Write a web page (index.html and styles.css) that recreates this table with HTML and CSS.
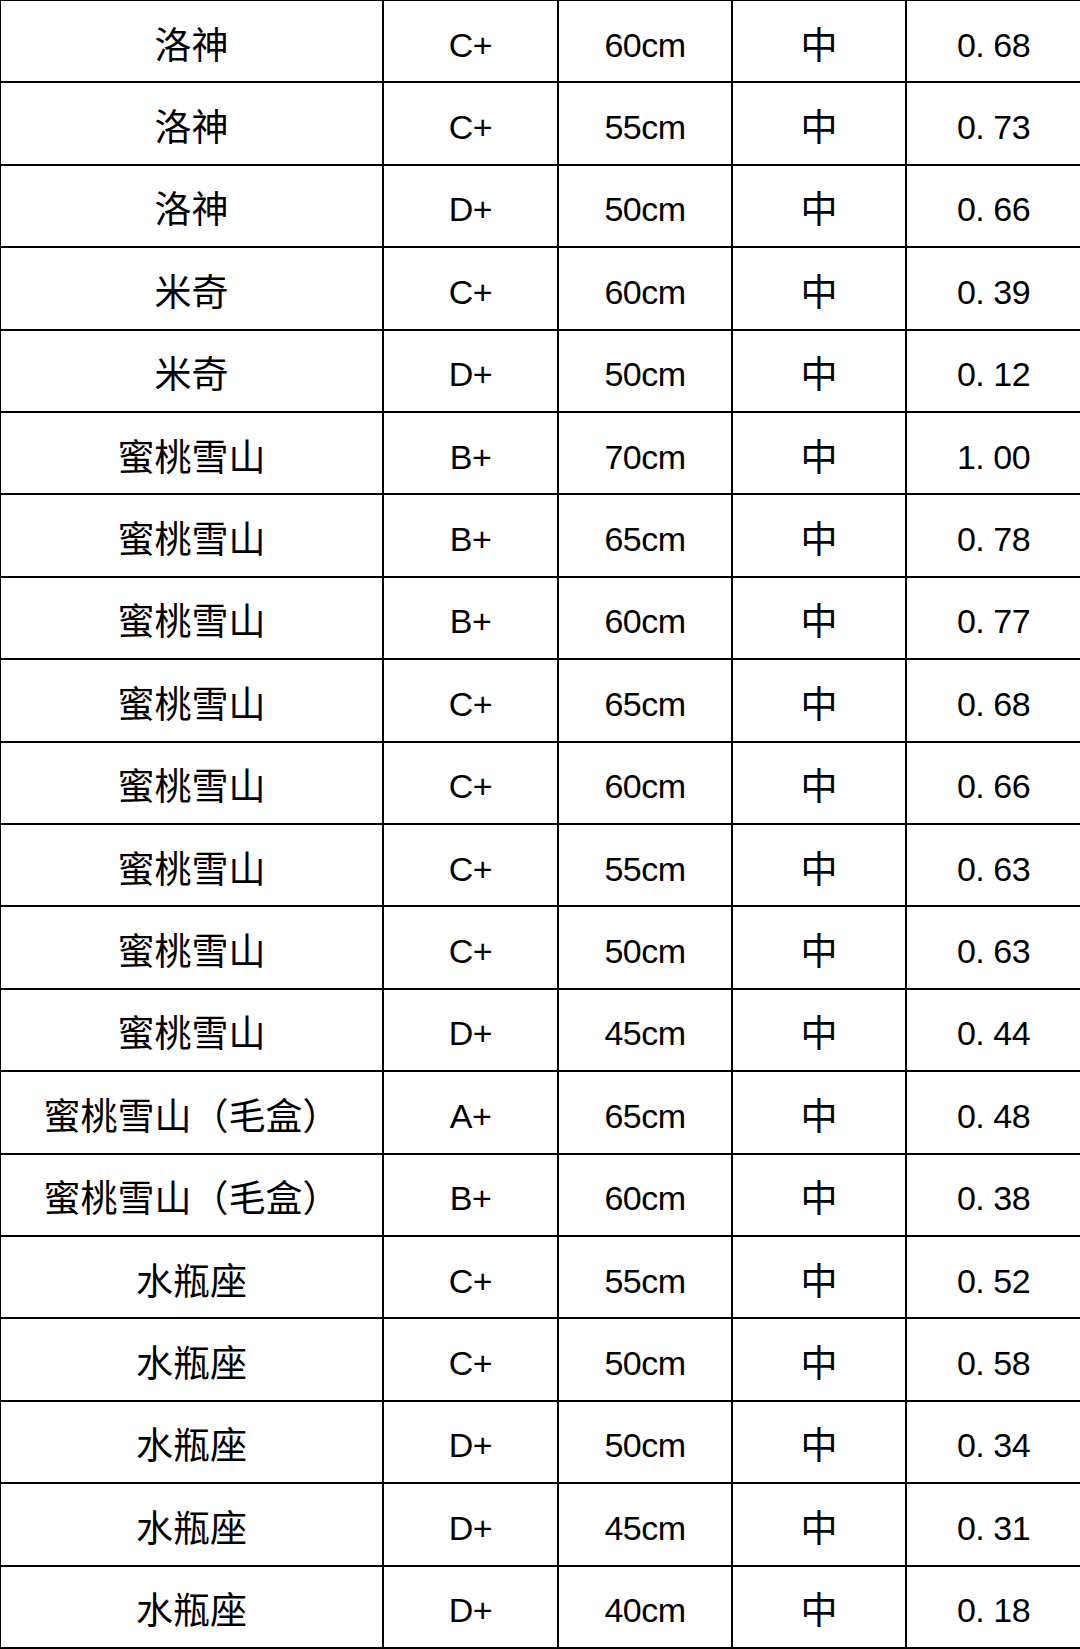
FILE: index.html
```html
<!DOCTYPE html>
<html lang="zh-CN">
<head>
<meta charset="utf-8">
<title>表格</title>
<link rel="stylesheet" href="styles.css">
</head>
<body>
<div class="sheet">
<div class="cell">洛神</div><div class="cell num">C+</div><div class="cell num">60cm</div><div class="cell">中</div><div class="cell num">0<span class="dot">.</span>68</div>
<div class="cell">洛神</div><div class="cell num">C+</div><div class="cell num">55cm</div><div class="cell">中</div><div class="cell num">0<span class="dot">.</span>73</div>
<div class="cell">洛神</div><div class="cell num">D+</div><div class="cell num">50cm</div><div class="cell">中</div><div class="cell num">0<span class="dot">.</span>66</div>
<div class="cell">米奇</div><div class="cell num">C+</div><div class="cell num">60cm</div><div class="cell">中</div><div class="cell num">0<span class="dot">.</span>39</div>
<div class="cell">米奇</div><div class="cell num">D+</div><div class="cell num">50cm</div><div class="cell">中</div><div class="cell num">0<span class="dot">.</span>12</div>
<div class="cell">蜜桃雪山</div><div class="cell num">B+</div><div class="cell num">70cm</div><div class="cell">中</div><div class="cell num">1<span class="dot">.</span>00</div>
<div class="cell">蜜桃雪山</div><div class="cell num">B+</div><div class="cell num">65cm</div><div class="cell">中</div><div class="cell num">0<span class="dot">.</span>78</div>
<div class="cell">蜜桃雪山</div><div class="cell num">B+</div><div class="cell num">60cm</div><div class="cell">中</div><div class="cell num">0<span class="dot">.</span>77</div>
<div class="cell">蜜桃雪山</div><div class="cell num">C+</div><div class="cell num">65cm</div><div class="cell">中</div><div class="cell num">0<span class="dot">.</span>68</div>
<div class="cell">蜜桃雪山</div><div class="cell num">C+</div><div class="cell num">60cm</div><div class="cell">中</div><div class="cell num">0<span class="dot">.</span>66</div>
<div class="cell">蜜桃雪山</div><div class="cell num">C+</div><div class="cell num">55cm</div><div class="cell">中</div><div class="cell num">0<span class="dot">.</span>63</div>
<div class="cell">蜜桃雪山</div><div class="cell num">C+</div><div class="cell num">50cm</div><div class="cell">中</div><div class="cell num">0<span class="dot">.</span>63</div>
<div class="cell">蜜桃雪山</div><div class="cell num">D+</div><div class="cell num">45cm</div><div class="cell">中</div><div class="cell num">0<span class="dot">.</span>44</div>
<div class="cell">蜜桃雪山（毛盒）</div><div class="cell num">A+</div><div class="cell num">65cm</div><div class="cell">中</div><div class="cell num">0<span class="dot">.</span>48</div>
<div class="cell">蜜桃雪山（毛盒）</div><div class="cell num">B+</div><div class="cell num">60cm</div><div class="cell">中</div><div class="cell num">0<span class="dot">.</span>38</div>
<div class="cell">水瓶座</div><div class="cell num">C+</div><div class="cell num">55cm</div><div class="cell">中</div><div class="cell num">0<span class="dot">.</span>52</div>
<div class="cell">水瓶座</div><div class="cell num">C+</div><div class="cell num">50cm</div><div class="cell">中</div><div class="cell num">0<span class="dot">.</span>58</div>
<div class="cell">水瓶座</div><div class="cell num">D+</div><div class="cell num">50cm</div><div class="cell">中</div><div class="cell num">0<span class="dot">.</span>34</div>
<div class="cell">水瓶座</div><div class="cell num">D+</div><div class="cell num">45cm</div><div class="cell">中</div><div class="cell num">0<span class="dot">.</span>31</div>
<div class="cell">水瓶座</div><div class="cell num">D+</div><div class="cell num">40cm</div><div class="cell">中</div><div class="cell num">0<span class="dot">.</span>18</div>
</div>
</body>
</html>
```
FILE: styles.css
```css
html, body {
  margin: 0;
  padding: 0;
  background: #fff;
}
.sheet {
  box-sizing: border-box;
  width: 1080px;
  height: 1649px;
  display: grid;
  grid-template-columns: 381px 173px 172px 172px 173px;
  grid-template-rows: repeat(20, 1fr);
  gap: 2px;
  padding: 1px 0 2px 1px;
  background: #000;
  font-family: "Noto Sans CJK SC", "Noto Sans", sans-serif;
  font-size: 37px;
  color: #000;
}
.cell {
  background: #fff;
  display: flex;
  align-items: center;
  justify-content: center;
  white-space: nowrap;
  padding-top: 3px;
  box-sizing: border-box;
}
.num {
  font-family: "Liberation Sans", Arial, sans-serif;
  font-size: 34px;
  letter-spacing: -0.5px;
  padding-top: 8px;
}
.dot {
  margin-right: 9px;
}
```
